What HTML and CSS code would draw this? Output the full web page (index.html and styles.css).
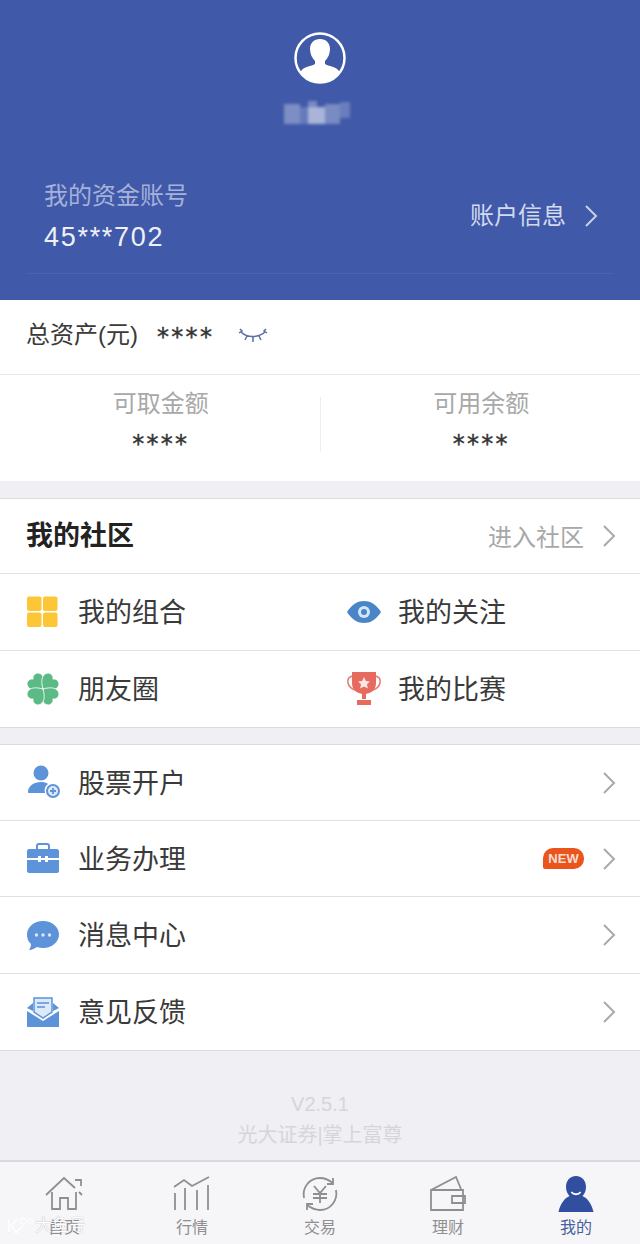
FILE: index.html
```html
<!DOCTYPE html>
<html lang="en">
<head>
  <meta charset="UTF-8">
  <meta name="viewport" content="width=device-width, initial-scale=1.0">
  <title>我的</title>
  <link rel="stylesheet" href="styles.css">
</head>
<body>
  <div class="page">

    <header class="header">
      <svg class="avatar" width="52" height="52" viewBox="0 0 52 52">
        <clipPath id="avatarClip"><circle cx="26" cy="26" r="24"/></clipPath>
        <circle cx="26" cy="26" r="24.500" fill="none" stroke="#fff" stroke-width="2.500"/>
        <g clip-path="url(#avatarClip)" fill="#fff">
          <path d="M26 7c-6 0-10 4-10 10 0 5 2 9 5 12v3c-3 2-12 3-14 7-1 2-1 4-1 11h40c0-7 0-9-1-11-2-4-11-5-14-7v-3c3-3 5-7 5-12 0-6-4-10-10-10z"/>
        </g>
      </svg>
      <svg class="name-blur" width="70" height="30" viewBox="0 0 70 30">
        <g fill="#fff">
          <rect x="0" y="6" width="16" height="20" opacity=".32"/>
          <rect x="16" y="9" width="8" height="17" opacity=".2"/>
          <rect x="24" y="3" width="9" height="6" opacity=".3"/>
          <rect x="24" y="9" width="17" height="17" opacity=".55"/>
          <rect x="41" y="6" width="15" height="20" opacity=".3"/>
          <rect x="56" y="4" width="10" height="16" opacity=".22"/>
        </g>
      </svg>
      <div class="account">
        <div>
          <div class="account-label">我的资金账号</div>
          <div class="account-num">45***702</div>
        </div>
        <div class="account-link">
          <span>账户信息</span>
          <svg class="chev" width="14" height="22" viewBox="0 0 14 22"><path d="M2 1l10 10L2 21" fill="none" stroke="#c6cfe8" stroke-width="2"/></svg>
        </div>
      </div>
    </header>

    <section class="assets">
      <div class="total">
        <span class="total-label">总资产(元)</span>
        <span class="stars total-stars">****</span>
        <svg class="lash" width="30" height="16" viewBox="0 0 30 16">
          <path d="M3 4c6 6 17 6 24 0M1 5l3-2-2-2M29 5l-3-2 2-2M9 8l-2 4M15 9v5M21 8l2 4" fill="none" stroke="#5a6ea8" stroke-width="1.500"/>
        </svg>
      </div>
      <div class="stats">
        <div class="stat">
          <div class="stat-label">可取金额</div>
          <div class="stars">****</div>
        </div>
        <div class="stat-divider"></div>
        <div class="stat">
          <div class="stat-label">可用余额</div>
          <div class="stars">****</div>
        </div>
      </div>
    </section>

    <section class="group">
      <div class="community">
        <span class="community-title">我的社区</span>
        <span class="community-link">进入社区</span>
        <svg class="chev" width="14" height="22" viewBox="0 0 14 22"><path d="M2 1l10 10L2 21" fill="none" stroke="#a9a9ae" stroke-width="2"/></svg>
      </div>
      <div class="grid-row">
        <div class="cell">
          <svg class="icon" width="36" height="36" viewBox="0 0 36 36">
            <g fill="#fdc636"><rect x="1" y="2.500" width="14.500" height="14.500" rx="2"/><rect x="17" y="2.500" width="14.500" height="14.500" rx="2"/><rect x="1" y="18.500" width="14.500" height="14.500" rx="2"/><rect x="17" y="18.500" width="14.500" height="14.500" rx="2"/></g>
          </svg>
          <span>我的组合</span>
        </div>
        <div class="cell">
          <svg class="icon" width="36" height="36" viewBox="0 0 36 36">
            <path d="M1 18C6 10 12 7 18 7s12 3 17 11c-5 8-11 11-17 11S6 26 1 18z" fill="#4a85c9"/>
            <circle cx="18" cy="18" r="6" fill="#d5e6f7"/><circle cx="18" cy="18" r="3" fill="#4a85c9"/>
          </svg>
          <span>我的关注</span>
        </div>
      </div>
      <div class="grid-row">
        <div class="cell">
          <svg class="icon" width="36" height="36" viewBox="0 0 36 36">
            <g fill="#5cbb85" stroke="#fff" stroke-width="0.800">
              <path d="M17 18C10 14 7 10 8 5.500 9 1 15 .5 17 4c2-3.500 8-3 9 1.500C27 10 24 14 17 18z" transform="rotate(-45 17 18)"/>
              <path d="M17 18C10 14 7 10 8 5.500 9 1 15 .5 17 4c2-3.500 8-3 9 1.500C27 10 24 14 17 18z" transform="rotate(45 17 18)"/>
              <path d="M17 18C10 14 7 10 8 5.500 9 1 15 .5 17 4c2-3.500 8-3 9 1.500C27 10 24 14 17 18z" transform="rotate(135 17 18)"/>
              <path d="M17 18C10 14 7 10 8 5.500 9 1 15 .5 17 4c2-3.500 8-3 9 1.500C27 10 24 14 17 18z" transform="rotate(225 17 18)"/>
            </g>
          </svg>
          <span>朋友圈</span>
        </div>
        <div class="cell">
          <svg class="icon" width="36" height="36" viewBox="0 0 36 36">
            <path d="M8 5C3 5 1 8 2 12s4 6 7 7M28 5c5 0 7 3 6 7s-4 6-7 7" fill="none" stroke="#e9776c" stroke-width="1.500"/>
            <path d="M6 1h24v11c0 7-5 11-12 11S6 19 6 12z" fill="#e66a5e"/>
            <path d="M16 22h4v6h-4zM11 29h14v5H11z" fill="#e66a5e"/>
            <path d="M18 6l1.900 3.900 4.100.5-3 2.900.8 4.200-3.800-2-3.800 2 .8-4.200-3-2.900 4.100-.5z" fill="#fbe6e3"/>
          </svg>
          <span>我的比赛</span>
        </div>
      </div>
    </section>

    <section class="group group-list">
      <div class="row">
        <svg class="icon" width="36" height="36" viewBox="0 0 36 36">
          <circle cx="15" cy="8" r="7.500" fill="#5c93d9"/>
          <path d="M2 27c0-6 6-10 13-10 3 0 5 .6 7 2-3 2-4 5-3 9H3c-.6 0-1-.4-1-1z" fill="#5c93d9"/>
          <circle cx="27" cy="26" r="6" fill="#dce9f8" stroke="#5c93d9" stroke-width="2"/>
          <path d="M27 23v6M24 26h6" stroke="#5c93d9" stroke-width="1.800"/>
        </svg>
        <span class="row-text">股票开户</span>
        <svg class="chev" width="14" height="22" viewBox="0 0 14 22"><path d="M2 1l10 10L2 21" fill="none" stroke="#a9a9ae" stroke-width="2"/></svg>
      </div>
      <div class="row">
        <svg class="icon" width="36" height="36" viewBox="0 0 36 36">
          <path d="M11 8V5c0-1 1-2 2-2h8c1 0 2 1 2 2v3" fill="none" stroke="#5c93d9" stroke-width="2"/>
          <path d="M3 8h28c1 0 2 1 2 2v7H22v-2h-3v2h-4v-2h-3v2H1v-7c0-1 1-2 2-2z" fill="#5c93d9"/>
          <path d="M1 19h11v2h3v-2h4v2h3v-2h11v11c0 1-1 2-2 2H3c-1 0-2-1-2-2z" fill="#5c93d9"/>
        </svg>
        <span class="row-text">业务办理</span>
        <span class="new-badge">NEW</span>
        <svg class="chev" width="14" height="22" viewBox="0 0 14 22"><path d="M2 1l10 10L2 21" fill="none" stroke="#a9a9ae" stroke-width="2"/></svg>
      </div>
      <div class="row">
        <svg class="icon" width="36" height="36" viewBox="0 0 36 36">
          <path d="M17 4c9 0 16 6 16 13.500S26 31 17 31c-2 0-4-.3-6-1-2 1.500-5 3-8 3 1-1.500 2-3.500 2-6-3-2.500-4-6-4-9.500C1 10 8 4 17 4z" fill="#5c93d9"/>
          <g fill="#dce9f8"><circle cx="10.500" cy="18" r="1.700"/><circle cx="17" cy="18" r="1.700"/><circle cx="23.500" cy="18" r="1.700"/></g>
        </svg>
        <span class="row-text">消息中心</span>
        <svg class="chev" width="14" height="22" viewBox="0 0 14 22"><path d="M2 1l10 10L2 21" fill="none" stroke="#a9a9ae" stroke-width="2"/></svg>
      </div>
      <div class="row">
        <svg class="icon" width="36" height="36" viewBox="0 0 36 36">
          <path d="M1 14l6-5v8zM33 14l-6-5v8zM1 17l16 10 16-10v16H2c-.6 0-1-.4-1-1z" fill="#5c93d9"/>
          <path d="M8 4h18v14l-9 6-9-6z" fill="#dce9f8" stroke="#5c93d9" stroke-width="1.500"/>
          <path d="M11 9h12M11 13h8" stroke="#5c93d9" stroke-width="1.500"/>
        </svg>
        <span class="row-text">意见反馈</span>
        <svg class="chev" width="14" height="22" viewBox="0 0 14 22"><path d="M2 1l10 10L2 21" fill="none" stroke="#a9a9ae" stroke-width="2"/></svg>
      </div>
    </section>

    <footer class="version">
      <div>V2.5.1</div>
      <div>光大证券|掌上富尊</div>
    </footer>

    <nav class="tabs">
      <div class="tab">
        <svg width="40" height="36" viewBox="0 0 40 36">
          <path d="M2 19L20 2l11 10M38 19l-3-3M31 4h6v6M8 16v17h8V22h8v11h8V16" fill="none" stroke="#8e8e93" stroke-width="1.800"/>
        </svg>
        <span>首页</span>
        <div class="watermark">
          <svg width="26" height="18" viewBox="0 0 26 18">
            <path d="M2 2v13M10 2L4 9l7 7M16 8c-2 5-8 6-9 8" fill="none" stroke="#fff" stroke-width="1.400"/>
            <circle cx="16" cy="4" r="3" fill="none" stroke="#fff"/><circle cx="23" cy="4" r="2.500" fill="none" stroke="#fff"/>
          </svg>
          <span>大鱼号</span>
        </div>
      </div>
      <div class="tab">
        <svg width="40" height="36" viewBox="0 0 40 36">
          <path d="M2 11l10-7 8 6L37 1M3 17v17M13 12v22M25 14v20M36 9v25" fill="none" stroke="#8e8e93" stroke-width="1.800"/>
        </svg>
        <span>行情</span>
      </div>
      <div class="tab">
        <svg width="40" height="36" viewBox="0 0 40 36">
          <path d="M4 22C2 12 9 2 20 2c5 0 9 2 13 5M36 14c2 10-5 20-16 20-5 0-9-2-13-5" fill="none" stroke="#8e8e93" stroke-width="1.800"/>
          <path d="M33 2v6h-6M7 34v-6h6" fill="none" stroke="#8e8e93" stroke-width="1.800"/>
          <path d="M14 10l6 7 6-7M20 17v10M13 18h14M13 22h14" fill="none" stroke="#8e8e93" stroke-width="1.800"/>
        </svg>
        <span>交易</span>
      </div>
      <div class="tab">
        <svg width="40" height="36" viewBox="0 0 40 36">
          <path d="M3 14L28 1l5 12M3 14h32v20H3zM24 20h13v7H24z" fill="#f6f6f8" stroke="#8e8e93" stroke-width="1.800"/>
        </svg>
        <span>理财</span>
      </div>
      <div class="tab tab-active">
        <svg width="40" height="36" viewBox="0 0 40 36">
          <path d="M20 0c-6.500 0-10 5-10 11 0 4 1.500 7 3.500 9-4.500 2-9 7-11 16h35c-2-9-6.500-14-11-16 2-2 3.500-5 3.500-9 0-6-3.500-11-10-11z" fill="#30509f"/>
          <path d="M15.500 16c2 3 7 3 9 0" fill="none" stroke="#fff" stroke-width="1.800"/>
        </svg>
        <span>我的</span>
      </div>
    </nav>

  </div>
</body>
</html>
```

FILE: styles.css
```css
* {
  box-sizing: border-box;
}

body {
  margin: 0;
  font-family: "Liberation Sans", "Noto Sans CJK SC", sans-serif;
  color: #333;
  background-color: #efeff4;
}

.page {
  display: flex;
  flex-direction: column;
  width: 640px;
  height: 1244px;
  overflow: hidden;
}

/* top blue part */
.header {
  height: 300px;
  padding: 32px 26px 0;
  display: flex;
  flex-direction: column;
  align-items: center;
  background-color: #4059a9;
}

.avatar {
  display: block;
}

.name-blur {
  margin-top: 14px;
  margin-left: -3px;
  filter: blur(1.500px);
}

.account {
  align-self: stretch;
  height: 115px;
  margin-top: 31px;
  padding: 0 16px 0 18px;
  display: flex;
  justify-content: space-between;
  align-items: center;
  border-bottom: 1px solid #4a63b1;
}

.account-label {
  font-size: 24px;
  line-height: 32px;
  color: #a5b2da;
}

.account-num {
  margin-top: 9px;
  font-size: 27px;
  line-height: 32px;
  letter-spacing: 1.700px;
  color: #eef0f8;
}

.account-link {
  display: flex;
  align-items: center;
  gap: 18px;
  font-size: 24px;
  color: #d3daee;
}

.account-link span {
  margin-bottom: 5px;
}

.account-link .chev {
  margin-bottom: 1px;
}

.chev {
  display: block;
  flex-shrink: 0;
}

/* assets */
.assets {
  height: 181px;
  background-color: #fff;
}

.total {
  height: 75px;
  padding-left: 26px;
  display: flex;
  align-items: center;
  border-bottom: 1px solid #e6e6e8;
}

.total-label {
  margin-bottom: 10px;
  font-size: 24px;
  color: #3a3a3a;
}

.total-stars {
  margin-left: 19px;
}

.lash {
  margin-left: 24px;
  margin-bottom: 3px;
}

.stars {
  font-family: "DejaVu Sans", sans-serif;
  font-size: 24px;
  line-height: 30px;
  letter-spacing: 2.300px;
  color: #333;
  -webkit-text-stroke: 0.4px #333;
}

.stats {
  height: 106px;
  display: flex;
}

.stat {
  flex: 1;
  padding: 14px 0 0 2px;
  text-align: center;
}

.stat-divider {
  width: 1px;
  height: 55px;
  margin-top: 22px;
  background-color: #eeeeee;
}

.stat-label {
  font-size: 24px;
  line-height: 30px;
  color: #a8a8a8;
}

.stat .stars {
  margin-top: 10px;
}

/* white groups */
.group {
  margin-top: 17px;
  background-color: #fff;
  border-top: 1px solid #dcdcde;
  border-bottom: 1px solid #dcdcde;
}

.community {
  height: 74px;
  padding: 0 24px 0 26px;
  display: flex;
  align-items: center;
}

.community-title {
  flex: 1;
  margin-bottom: 5px;
  font-size: 27px;
  font-weight: 700;
  color: #222;
}

.community-link {
  margin-right: 18px;
  margin-bottom: 2px;
  font-size: 24px;
  color: #a8a8a8;
}

.grid-row {
  height: 77px;
  display: flex;
  border-top: 1px solid #e3e3e6;
}

.cell {
  flex: 1;
  padding-left: 26px;
  display: flex;
  align-items: center;
  gap: 16px;
  font-size: 27px;
  color: #3a3a3a;
}

.cell span {
  margin-bottom: 4px;
}

.group-list {
  margin-top: 16px;
}

.row {
  height: 76.200px;
  padding: 0 24px 0 26px;
  display: flex;
  align-items: center;
  gap: 16px;
  font-size: 27px;
  color: #3a3a3a;
  border-bottom: 1px solid #e0e0e3;
}

.row:last-child {
  border-bottom: none;
}

.row-text {
  flex: 1;
  margin-bottom: 3px;
}

.icon {
  display: block;
  flex-shrink: 0;
}

.new-badge {
  height: 21px;
  width: 41px;
  margin-right: 2px;
  display: flex;
  align-items: center;
  justify-content: center;
  font-size: 13px;
  font-weight: 700;
  color: #f9ddcf;
  background-color: #e9551c;
  border-radius: 10px 10px 10px 2px;
}

/* version text */
.version {
  flex: 1;
  padding-top: 38px;
  text-align: center;
  font-size: 20px;
  line-height: 31px;
  color: #d6d6da;
}

/* bottom tabs */
.tabs {
  height: 84px;
  display: flex;
  background-color: #f6f6f8;
  border-top: 2px solid #d9d9db;
}

.tab {
  position: relative;
  flex: 1;
  padding-top: 14px;
  display: flex;
  flex-direction: column;
  align-items: center;
  font-size: 16px;
  line-height: 22px;
  color: #8e8e93;
}

.tab span {
  margin-top: 5px;
}

.tab-active {
  color: #4a5f9e;
}

.watermark {
  position: absolute;
  left: 7px;
  top: 53px;
  display: flex;
  align-items: center;
  gap: 2px;
  font-size: 17px;
  color: #fff;
  text-shadow: 0 0 1px rgba(0, 0, 0, 0.4);
}

.watermark span {
  margin-top: 0;
}
```
